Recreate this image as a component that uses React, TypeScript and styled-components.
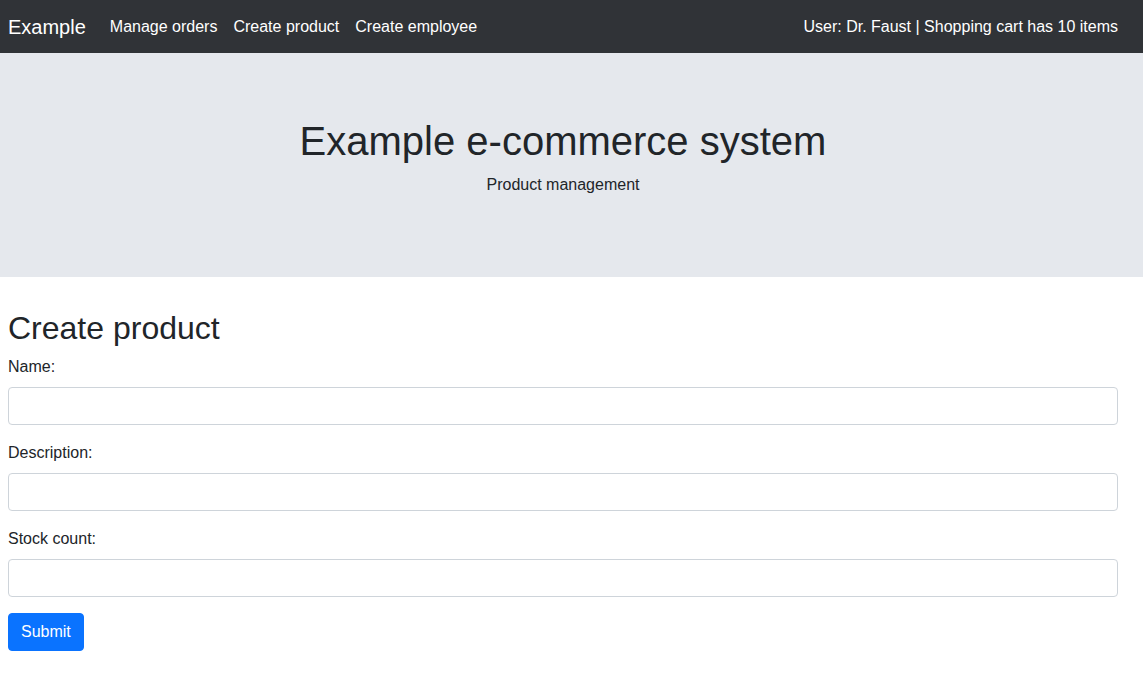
import React from "react";
import styled, { createGlobalStyle } from "styled-components";

const Global = createGlobalStyle`
  html, body { margin: 0; padding: 0; background: #ffffff; }
  body {
    font-family: "Liberation Sans", Arial, Helvetica, sans-serif;
    font-size: 16px;
    line-height: 1.5;
    color: #212529;
  }
  * { box-sizing: border-box; }
`;

const Container = styled.div`
  width: 1110px;
  margin-left: 8px;
`;

const NavBar = styled.nav`
  background: #303337;
  height: 53px;
`;

const NavInner = styled(Container)`
  height: 100%;
  display: flex;
  align-items: center;
`;

const Brand = styled.a`
  color: #ffffff;
  font-size: 20px;
  line-height: 30px;
  margin-right: 16px;
  text-decoration: none;
`;

const NavList = styled.div`
  display: flex;
  align-items: center;
`;

const NavLink = styled.a`
  color: #ffffff;
  font-size: 16px;
  padding: 8px;
  text-decoration: none;
`;

const NavText = styled.span`
  margin-left: auto;
  color: #ffffff;
  font-size: 16px;
`;

const Jumbotron = styled.header`
  background: #e5e8ed;
  padding: 64px 0;
  margin-bottom: 32px;
  text-align: center;
`;

const Title = styled.h1`
  margin: 0 0 8px;
  font-size: 40px;
  font-weight: 400;
  line-height: 1.2;
  color: #212529;
`;

const Lead = styled.p`
  margin: 0 0 16px;
  font-size: 16px;
`;

const Heading = styled.h2`
  margin: 0 0 8px;
  font-size: 32px;
  font-weight: 400;
  line-height: 1.2;
`;

const Group = styled.div`
  margin-bottom: 16px;
`;

const Label = styled.label`
  display: block;
  margin-bottom: 8px;
`;

const Input = styled.input`
  display: block;
  width: 100%;
  height: 38px;
  padding: 6px 12px;
  font: inherit;
  border: 1px solid #ced4da;
  border-radius: 4px;
  background: #ffffff;
  outline: none;
`;

const Button = styled.button`
  display: inline-block;
  height: 38px;
  padding: 6px 12px;
  font: inherit;
  line-height: 24px;
  color: #ffffff;
  background: #0a73ff;
  border: 1px solid #0a73ff;
  border-radius: 4px;
`;

export default function App() {
  return (
    <>
      <Global />
      <NavBar>
        <NavInner>
          <Brand href="#">Example</Brand>
          <NavList>
            <NavLink href="#">Manage orders</NavLink>
            <NavLink href="#">Create product</NavLink>
            <NavLink href="#">Create employee</NavLink>
          </NavList>
          <NavText>User: Dr. Faust | Shopping cart has 10 items</NavText>
        </NavInner>
      </NavBar>
      <Jumbotron>
        <Container>
          <Title>Example e-commerce system</Title>
          <Lead>Product management</Lead>
        </Container>
      </Jumbotron>
      <Container>
        <Heading>Create product</Heading>
        <form onSubmit={(e) => e.preventDefault()}>
          <Group>
            <Label>Name:</Label>
            <Input type="text" />
          </Group>
          <Group>
            <Label>Description:</Label>
            <Input type="text" />
          </Group>
          <Group>
            <Label>Stock count:</Label>
            <Input type="text" />
          </Group>
          <Button type="submit">Submit</Button>
        </form>
      </Container>
    </>
  );
}
